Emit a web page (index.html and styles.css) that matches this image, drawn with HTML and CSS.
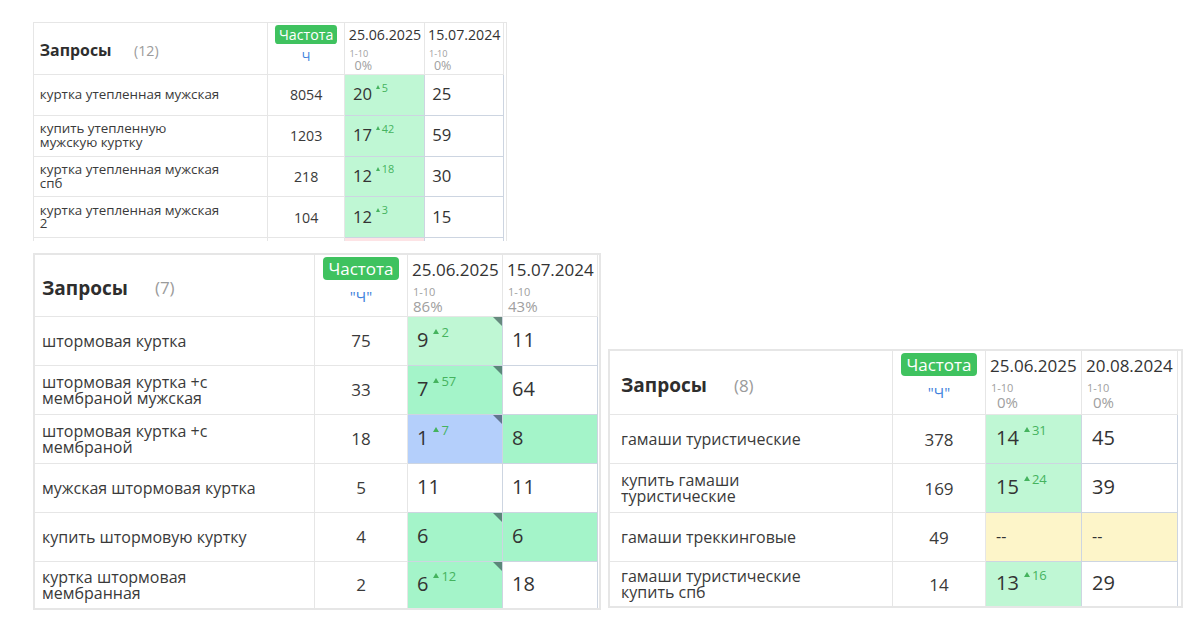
FILE: index.html
```html
<!DOCTYPE html>
<html lang="ru">
<head>
<meta charset="utf-8">
<title>Запросы</title>
<link rel="stylesheet" href="styles.css">
</head>
<body>
<div class="page">
  <div class="col-left">
    <div class="sheet sheet-small">
      <div class="grid grid-a rows-a">
        <div class="c hq"><span class="h-title">Запросы</span><span class="h-count">(12)</span></div>
        <div class="c hf"><span class="badge">Частота</span><span class="mode">Ч</span></div>
        <div class="c hd"><span class="date">25.06.2025</span><span class="range">1-10</span><span class="pct pct-zero">0%</span></div>
        <div class="c hd"><span class="date">15.07.2024</span><span class="range">1-10</span><span class="pct pct-zero">0%</span></div>

        <div class="c q">куртка утепленная мужская</div>
        <div class="c f">8054</div>
        <div class="c d g1"><span class="val">20<span class="delta">5</span></span></div>
        <div class="c d"><span class="val">25</span></div>

        <div class="c q">купить утепленную<br>мужскую куртку</div>
        <div class="c f">1203</div>
        <div class="c d g1"><span class="val">17<span class="delta">42</span></span></div>
        <div class="c d"><span class="val">59</span></div>

        <div class="c q">куртка утепленная мужская<br>спб</div>
        <div class="c f">218</div>
        <div class="c d g1"><span class="val">12<span class="delta">18</span></span></div>
        <div class="c d"><span class="val">30</span></div>

        <div class="c q">куртка утепленная мужская<br>2</div>
        <div class="c f">104</div>
        <div class="c d g1"><span class="val">12<span class="delta">3</span></span></div>
        <div class="c d"><span class="val">15</span></div>

        <div class="c q"></div>
        <div class="c f"></div>
        <div class="c d pink"></div>
        <div class="c d"></div>
      </div>
    </div>

    <div class="sheet sheet-mid">
      <div class="grid grid-a rows-b">
        <div class="c hq"><span class="h-title">Запросы</span><span class="h-count">(7)</span></div>
        <div class="c hf"><span class="badge">Частота</span><span class="mode">"Ч"</span></div>
        <div class="c hd"><span class="date">25.06.2025</span><span class="range">1-10</span><span class="pct">86%</span></div>
        <div class="c hd"><span class="date">15.07.2024</span><span class="range">1-10</span><span class="pct">43%</span></div>

        <div class="c q">штормовая куртка</div>
        <div class="c f">75</div>
        <div class="c d g1 mark"><span class="val">9<span class="delta">2</span></span></div>
        <div class="c d"><span class="val">11</span></div>

        <div class="c q">штормовая куртка +с<br>мембраной мужская</div>
        <div class="c f">33</div>
        <div class="c d g2 mark"><span class="val">7<span class="delta">57</span></span></div>
        <div class="c d"><span class="val">64</span></div>

        <div class="c q">штормовая куртка +с<br>мембраной</div>
        <div class="c f">18</div>
        <div class="c d blue mark"><span class="val">1<span class="delta">7</span></span></div>
        <div class="c d g2"><span class="val">8</span></div>

        <div class="c q">мужская штормовая куртка</div>
        <div class="c f">5</div>
        <div class="c d"><span class="val">11</span></div>
        <div class="c d"><span class="val">11</span></div>

        <div class="c q">купить штормовую куртку</div>
        <div class="c f">4</div>
        <div class="c d g2 mark"><span class="val">6</span></div>
        <div class="c d g2"><span class="val">6</span></div>

        <div class="c q last">куртка штормовая<br>мембранная</div>
        <div class="c f last">2</div>
        <div class="c d g2 mark last"><span class="val">6<span class="delta">12</span></span></div>
        <div class="c d last"><span class="val">18</span></div>
      </div>
    </div>
  </div>

  <div class="col-right">
    <div class="sheet sheet-wide">
      <div class="grid grid-b rows-c">
        <div class="c hq"><span class="h-title">Запросы</span><span class="h-count">(8)</span></div>
        <div class="c hf"><span class="badge">Частота</span><span class="mode">"Ч"</span></div>
        <div class="c hd"><span class="date">25.06.2025</span><span class="range">1-10</span><span class="pct pct-zero">0%</span></div>
        <div class="c hd"><span class="date">20.08.2024</span><span class="range">1-10</span><span class="pct pct-zero">0%</span></div>

        <div class="c q">гамаши туристические</div>
        <div class="c f">378</div>
        <div class="c d g1"><span class="val">14<span class="delta">31</span></span></div>
        <div class="c d"><span class="val">45</span></div>

        <div class="c q">купить гамаши<br>туристические</div>
        <div class="c f">169</div>
        <div class="c d g1"><span class="val">15<span class="delta">24</span></span></div>
        <div class="c d"><span class="val">39</span></div>

        <div class="c q">гамаши треккинговые</div>
        <div class="c f">49</div>
        <div class="c d yellow"><span class="val dash">--</span></div>
        <div class="c d yellow"><span class="val dash">--</span></div>

        <div class="c q last">гамаши туристические<br>купить спб</div>
        <div class="c f last">14</div>
        <div class="c d g1 last"><span class="val">13<span class="delta">16</span></span></div>
        <div class="c d last"><span class="val">29</span></div>
      </div>
    </div>
  </div>
</div>
</body>
</html>
```

FILE: styles.css
```css
* { box-sizing: border-box; }

body {
  margin: 0;
  background: #fff;
  font-family: "Open Sans", "Noto Sans", sans-serif;
  color: #333;
}

.page {
  display: flex;
  align-items: flex-start;
  gap: 7px;
  padding: 22px 0 0 33px;
}

.col-left {
  display: flex;
  flex-direction: column;
  align-items: flex-start;
  gap: 12px;
}

.col-right {
  padding-top: 327px;
}

.sheet {
  border: 2px solid #e6e6e6;
  background: #fff;
}

.sheet-small {
  zoom: 0.835;
  height: 262px;
  overflow: hidden;
  border-bottom: 0;
  padding-right: 2px;
}

.sheet-mid { padding-right: 1px; }
.sheet-wide { padding-right: 3px; }

.grid { display: grid; }
.grid-a { grid-template-columns: 280px 93px 95px 95px; }
.grid-b { grid-template-columns: 283px 93px 96px 96px; }

.rows-a { grid-template-rows: 62px 49px 49px 49px 49px 49px; }
.rows-b { grid-template-rows: 62px 49px 49px 49px 49px 49px 46px; }
.rows-c { grid-template-rows: 64px 49px 49px 49px 44px; }

.c {
  display: flex;
  align-items: center;
  min-width: 0;
  border-right: 1px solid #e6e6e6;
  border-bottom: 1px solid #e6e6e6;
}

.c.last { border-bottom: 0; }

/* header */
.hq { padding: 5px 0 0 7px; }
.grid-b .hq { padding-left: 11px; }

.h-title {
  font-size: 19px;
  font-weight: 700;
  color: #2e2e2e;
}

.h-count {
  margin-left: 27px;
  font-size: 17px;
  color: #9b9b9b;
}

.hf {
  flex-direction: column;
  justify-content: flex-start;
  padding-top: 2px;
}

.badge {
  background: #3fc25f;
  color: #fff;
  font-size: 17px;
  line-height: 23px;
  padding: 0 5px;
  border-radius: 4px;
}

.mode {
  margin-top: 6px;
  font-size: 15px;
  line-height: 20px;
  color: #3d7fdc;
}

.hd {
  flex-direction: column;
  align-items: flex-start;
  justify-content: flex-start;
  padding: 5px 0 0 4px;
}

.date {
  font-size: 17px;
  line-height: 20px;
  color: #333;
  white-space: nowrap;
}

.range {
  margin-top: 6px;
  padding-left: 1px;
  font-size: 11px;
  line-height: 12px;
  color: #a0a0a0;
}

.pct {
  margin-top: 1px;
  padding-left: 1px;
  font-size: 15px;
  line-height: 14px;
  color: #a0a0a0;
}

.pct-zero { padding-left: 7px; }

/* body */
.q {
  padding-left: 7px;
  font-size: 16px;
  line-height: 16px;
  color: #3a3a3a;
}

.grid-b .q { padding-left: 11px; }

.f {
  justify-content: center;
  font-size: 17px;
  color: #3a3a3a;
}

.d {
  position: relative;
  padding: 0 0 3px 9px;
  font-size: 20px;
  color: #333;
  border-color: #cdd5e1;
}

.grid-b .d { padding-left: 10px; }

.val { white-space: nowrap; }
.dash { font-size: 16px; }

.delta {
  margin-left: 5px;
  font-size: 13px;
  line-height: 1;
  vertical-align: 10px;
  color: #45b35e;
}

.delta::before {
  content: "";
  display: inline-block;
  margin-right: 2px;
  vertical-align: 3px;
  border-left: 3px solid transparent;
  border-right: 3px solid transparent;
  border-bottom: 5px solid currentColor;
}

.g1 { background: #bff7d4; }
.g2 { background: #a4f4c9; }
.blue { background: #b4cffb; }
.yellow { background: #fdf5c9; }
.pink { background: #fde3e5; }

.mark::after {
  content: "";
  position: absolute;
  top: 0;
  right: 0;
  border-top: 9px solid rgba(30, 45, 55, 0.55);
  border-left: 9px solid transparent;
}
```
